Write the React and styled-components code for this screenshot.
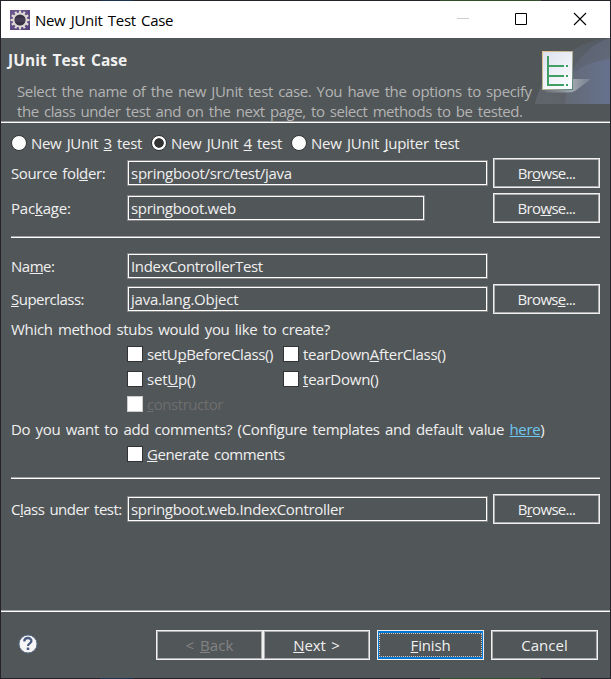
import React from "react";
import styled, { createGlobalStyle } from "styled-components";

const Global = createGlobalStyle`
  html, body { margin: 0; padding: 0; background: #26282c; overflow: hidden; }
  * { box-sizing: border-box; }
`;

const Desktop = styled.div`
  width: 611px;
  height: 679px;
  padding: 1px 1px 1px;
  background: linear-gradient(90deg, #25222a 0 100px, #1c3350 100px 133px, #252329 133px 440px, #35502c 440px 541px, #25222a 541px);
  font: 15px/20px "Open Sans", "Noto Sans", sans-serif;
  word-spacing: 1.75px;
  color: #f0f0f0;
`;

const Window = styled.main`
  display: flex;
  flex-direction: column;
  width: 609px;
  height: 677px;
  background: #515658;
`;

const TitleBar = styled.header`
  display: flex;
  align-items: center;
  height: 37px;
  flex: none;
  padding-left: 9px;
  background: #fff;
  color: #000;
`;

const Text = styled.span`
  display: block;
  white-space: pre;
  letter-spacing: ${(p) => p.$ls ?? -0.32}px;
`;

const TitleText = styled(Text)`
  flex: 1;
  margin-left: 5px;
`;

const WindowControls = styled.svg`
  display: block;
  width: 160px;
  height: 37px;
`;

const Banner = styled.section`
  display: flex;
  justify-content: space-between;
  height: 85px;
  flex: none;
  padding-left: 7px;
  border-bottom: 1px solid #fff;
  box-shadow: inset 0 -1px #999;
`;

const BannerCopy = styled.div`
  padding-top: 12px;
`;

const Heading = styled.h1`
  margin: 0 0 11px;
  font-size: 15.5px;
  line-height: 20px;
  font-weight: 700;
  letter-spacing: 0.04px;
`;

const Description = styled.p`
  margin: 0 0 0 9px;
  color: #b4b4b4;
`;

const BannerArt = styled.svg`
  display: block;
  width: 75px;
  height: 66px;
  flex: none;
`;

const Body = styled.section`
  display: flex;
  flex-direction: column;
  gap: 5px;
  flex: 1;
  padding: 10px 10px 0;
`;

const RadioRow = styled.div`
  display: grid;
  grid-template-columns: 140px 140px 1fr;
  height: 20px;
`;

const Option = styled.label`
  display: flex;
  align-items: center;
  gap: 4px;
  color: ${(p) => (p.$disabled ? "#6e6e6e" : "inherit")};
`;

const Radio = styled.i`
  flex: none;
  width: 16px;
  height: 16px;
  border: 1px solid #333;
  border-radius: 50%;
  background: ${(p) => (p.$on ? "radial-gradient(circle, #333 0 4.4px, #fff 5.1px)" : "#fff")};
`;

const Box = styled.i`
  flex: none;
  width: 16px;
  height: 16px;
  border: 1px solid ${(p) => (p.$disabled ? "#ccc" : "#333")};
  background: #fff;
`;

const FieldRow = styled.div`
  display: grid;
  grid-template-columns: 116px 361px 107px;
  align-items: center;
  height: ${(p) => p.$height ?? 30}px;
`;

const Input = styled.div`
  width: ${(p) => p.$width ?? 361}px;
  height: 26px;
  padding: 2px 3px;
  border: 1px solid #858585;
  box-shadow: inset 0 0 0 1px #fff;
`;

const Button = styled.button`
  display: flex;
  align-items: center;
  justify-content: center;
  width: 107px;
  height: 30px;
  padding: 0;
  border: 1px solid #f0f0f0;
  box-shadow: inset 0 0 0 1px #adadad;
  background: transparent;
  color: ${(p) => (p.$disabled ? "#838383" : "inherit")};
  font: inherit;
  word-spacing: inherit;
`;

const BrowseButton = styled(Button)`
  margin-left: 5px;
`;

const DefaultButton = styled(Button)`
  box-shadow: inset 0 0 0 1px #0078d7, inset 0 2px #0078d7, inset 0 -2px #0078d7;
`;

const FocusFrame = styled.span`
  display: flex;
  align-items: center;
  justify-content: center;
  width: 103px;
  height: 24px;
  border: 1px dotted #d2cac0;
`;

const Key = styled.u`
  text-decoration-thickness: 1px;
  text-underline-offset: 1px;
  text-decoration-skip-ink: none;
`;

const Link = styled(Key)`
  color: #6fc5ee;
`;

const Separator = styled.hr`
  width: 589px;
  height: 2px;
  margin: ${(p) => p.$margin};
  border: 0;
  background: linear-gradient(#a0a0a0 50%, #fff 50%);
`;

const Options = styled.div`
  display: grid;
  grid-template-columns: 156px 1fr;
  grid-auto-rows: 20px;
  row-gap: 5px;
  padding-left: 116px;
`;

const Footer = styled.footer`
  display: flex;
  align-items: flex-start;
  height: 68px;
  flex: none;
  padding: 18px 12px 0 17px;
  border-top: 1px solid #a0a0a0;
  box-shadow: inset 0 1px #fff;
`;

const HelpIcon = styled.svg`
  display: block;
  width: 20px;
  height: 20px;
  margin-top: 5px;
`;

const Actions = styled.div`
  display: flex;
  margin-left: auto;
  padding-top: 1px;
`;

const Pair = styled.div`
  display: flex;
  margin-right: 7px;
`;

const Last = styled.div`
  margin-left: 7px;
`;

const teeth = [0, 30, 60, 90, 120, 150, 180, 210, 240, 270, 300, 330];

function GearIcon() {
  return (
    <svg width="20" height="20" viewBox="0 0 20 20">
      <defs>
        <linearGradient id="gearBg" x2="1" y2="1">
          <stop stopColor="#6d5990" />
          <stop offset="1" stopColor="#544078" />
        </linearGradient>
      </defs>
      <rect width="20" height="20" fill="url(#gearBg)" />
      {teeth.map((a) => (
        <rect key={a} x="8.9" y="0.5" width="2.2" height="4" fill="#ddd8d4" transform={`rotate(${a} 10 10)`} />
      ))}
      <circle cx="10" cy="10" r="6.6" fill="#383246" stroke="#ddd8d4" strokeWidth="2" />
      <path d="M5.5 9h9M5 11h10" stroke="#5b5270" strokeWidth=".7" />
    </svg>
  );
}

function Art() {
  return (
    <BannerArt viewBox="0 0 75 66">
      <defs>
        <linearGradient id="outer" x2="1" y1="1" y2="0">
          <stop stopColor="#61656b" />
          <stop offset="1" stopColor="#535b64" />
        </linearGradient>
        <linearGradient id="mid" y2="1">
          <stop stopColor="#59616d" />
          <stop offset="1" stopColor="#666d80" />
        </linearGradient>
        <linearGradient id="inner" x2="1">
          <stop stopColor="#636a75" />
          <stop offset="1" stopColor="#66718e" />
        </linearGradient>
        <linearGradient id="paper" x2=".6" y2="1">
          <stop stopColor="#dce1ef" />
          <stop offset="1" stopColor="#fafbfd" />
        </linearGradient>
        <linearGradient id="edge" y2="1">
          <stop stopColor="#e5c28c" />
          <stop offset=".55" stopColor="#b3b296" />
          <stop offset="1" stopColor="#4f8176" />
        </linearGradient>
        <linearGradient id="shade" x2="1">
          <stop stopColor="#b9bdc1" stopOpacity=".15" />
          <stop offset=".6" stopColor="#b4b8be" stopOpacity=".75" />
          <stop offset="1" stopColor="#b4b8be" stopOpacity=".2" />
        </linearGradient>
      </defs>
      <path d="M0 66C5 44 22 16 52 5Q62 1 75 0V66Z" fill="url(#outer)" />
      <path d="M31 49C39 23 53 7 75 0V66H31Z" fill="url(#mid)" />
      <path d="M30 66Q31 48 38 35Q54 23 75 21V66Z" fill="url(#inner)" />
      <path d="M10 52 20 41H56L40 53Q37 54.500 33 54.500H14Q9 54.500 10 52Z" fill="url(#shade)" />
      <rect x="7.500" y="13.500" width="30" height="38" fill="url(#paper)" stroke="url(#edge)" />
      <path d="M12 18h2v9h15v2H14v8h15v2H14v7h15v2H12zM31 27h2v2h-2zM31 37h2v2h-2zM31 46h2v2h-2z" fill="#419f66" />
    </BannerArt>
  );
}

function Check({ children, disabled, ls }) {
  return (
    <Option $disabled={disabled}>
      <Box $disabled={disabled} />
      <Text $ls={ls}>{children}</Text>
    </Option>
  );
}

function Field({ label, value, labelLs, valueLs, width, height, browse }) {
  return (
    <FieldRow $height={height}>
      <Text $ls={labelLs}>{label}</Text>
      <Input $width={width}><Text $ls={valueLs}>{value}</Text></Input>
      {browse && <BrowseButton><Text $ls={-0.68}>{browse}</Text></BrowseButton>}
    </FieldRow>
  );
}

export default function App() {
  return (
    <Desktop>
      <Global />
      <Window>
        <TitleBar>
          <GearIcon />
          <TitleText $ls={-0.31}>New JUnit Test Case</TitleText>
          <WindowControls viewBox="0 0 160 37" fill="none">
            <path d="M7 17.500H19" stroke="#ccc" />
            <path d="M65.500 12.500h11v11h-11z" stroke="#000" />
            <path d="M124 12l12 12M136 12l-12 12" stroke="#000" strokeWidth="1.100" />
          </WindowControls>
        </TitleBar>
        <Banner>
          <BannerCopy>
            <Heading>JUnit Test Case</Heading>
            <Description>
              <Text $ls={-0.37}>Select the name of the new JUnit test case. You have the options to specify</Text>
              <Text $ls={-0.43}>the class under test and on the next page, to select methods to be tested.</Text>
            </Description>
          </BannerCopy>
          <Art />
        </Banner>
        <Body>
          <RadioRow>
            <Option><Radio /><Text $ls={-0.34}>New JUnit <Key>3</Key> test</Text></Option>
            <Option><Radio $on /><Text $ls={-0.34}>New JUnit <Key>4</Key> test</Text></Option>
            <Option><Radio /><Text $ls={-0.25}>New JUnit <Key>J</Key>upiter test</Text></Option>
          </RadioRow>
          <Field label={<>Source fol<Key>d</Key>er:</>} labelLs={-0.36} value="springboot/src/test/java" valueLs={-0.27} browse={<>Br<Key>o</Key>wse...</>} />
          <Field label={<>Pac<Key>k</Key>age:</>} labelLs={-0.2} value="springboot.web" valueLs={-0.32} width={298} browse={<>Bro<Key>w</Key>se...</>} />
          <Separator $margin="8px 0 10px" />
          <Field label={<>Na<Key>m</Key>e:</>} labelLs={-0.5} value="IndexControllerTest" valueLs={-0.34} height={26} />
          <Field label={<><Key>S</Key>uperclass:</>} labelLs={-0.52} value="java.lang.Object" valueLs={-0.22} browse={<>Brows<Key>e</Key>...</>} />
          <Text>Which method stubs would you like to create?</Text>
          <Options>
            <Check ls={-0.35}>setU<Key>p</Key>BeforeClass()</Check>
            <Check ls={-0.28}>tearDown<Key>A</Key>fterClass()</Check>
            <Check ls={-0.2}>set<Key>U</Key>p()</Check>
            <Check ls={-0.23}><Key>t</Key>earDown()</Check>
            <Check disabled ls={-0.45}><Key>c</Key>onstructor</Check>
          </Options>
          <Text $ls={-0.315}>Do you want to add comments? (Configure templates and default value <Link>here</Link>)</Text>
          <Options>
            <Check ls={-0.43}><Key>G</Key>enerate comments</Check>
          </Options>
          <Separator $margin="8px 0 10px" />
          <Field label={<>C<Key>l</Key>ass under test:</>} labelLs={-0.52} value="springboot.web.IndexController" valueLs={-0.32} browse={<>B<Key>r</Key>owse...</>} />
        </Body>
        <Footer>
          <HelpIcon viewBox="0 0 20 20">
            <circle cx="10" cy="10" r="9" fill="#f6f6f6" stroke="#5e6e8b" />
            <path d="M6.300 7.500C6.300 2.800 13.700 3 13.400 7.200C13.200 9.500 10 9.300 10 12" fill="none" stroke="#4b5c80" strokeWidth="2.300" />
            <rect x="8.700" y="13.600" width="2.600" height="2.500" rx=".5" fill="#4b5c80" />
          </HelpIcon>
          <Actions>
            <Pair>
              <Button $disabled><Text $ls={0.1}>&lt; <Key>B</Key>ack</Text></Button>
              <Button><Text $ls={-0.1}><Key>N</Key>ext &gt;</Text></Button>
            </Pair>
            <DefaultButton><FocusFrame><Text $ls={-0.16}><Key>F</Key>inish</Text></FocusFrame></DefaultButton>
            <Last><Button><Text $ls={0}>Cancel</Text></Button></Last>
          </Actions>
        </Footer>
      </Window>
    </Desktop>
  );
}
